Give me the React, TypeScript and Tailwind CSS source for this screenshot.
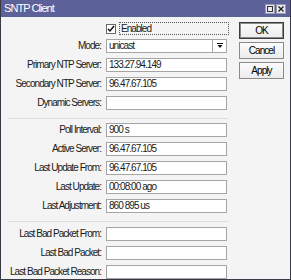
import React from 'react'

const font = "font-['Liberation_Sans',Arial,sans-serif] tracking-[-0.95px]"

function Field({ label, value, className = '' }: { label: string; value?: string; className?: string }) {
  return (
    <div className={`flex h-[14px] items-center ${className}`}>
      <div className="w-[101px] pr-[1px] text-right whitespace-nowrap leading-none">{label}</div>
      <div className="ml-[4px] flex h-[14px] w-[121px] items-center border border-[#a5a5a5] bg-white pl-[2px] leading-none">
        {value}
      </div>
    </div>
  )
}

function Btn({ label, primary }: { label: string; primary?: boolean }) {
  return (
    <button
      className={`flex h-[17px] w-[45px] items-center justify-center bg-gradient-to-b from-[#fbfbfb] to-[#ececec] leading-none text-black ${
        primary ? 'border border-[#3c3c3c] shadow-[inset_0_0_0_1px_#8a8a8a]' : 'border border-[#8a8a8a]'
      }`}
    >
      {label}
    </button>
  )
}

export default function App() {
  return (
    <div className={`h-[280px] w-[291px] overflow-hidden bg-[#f4f4f4] text-[10px] text-[#1a1a1a] ${font}`}>
      <div className="flex h-full flex-col border-x border-b border-[#3a3a46]">
        {/* title bar */}
        <div className="flex h-[17px] items-center bg-[#5d6199] pl-[3px] pr-[4px] text-[11px] text-white">
          <span className="leading-none">SNTP Client</span>
          <div className="ml-auto flex gap-[1px]">
            <div className="flex h-[10px] w-[10px] items-center justify-center border border-[#9a9ab0] bg-[#e8e8ee]">
              <div className="h-[6px] w-[6px] border border-[#333]" />
            </div>
            <div className="flex h-[10px] w-[10px] items-center justify-center border border-[#9a9ab0] bg-[#e8e8ee]">
              <svg width="6" height="6" viewBox="0 0 6 6">
                <path d="M0.5 0.5L5.5 5.5M5.5 0.5L0.5 5.5" stroke="#222" strokeWidth="1.4" />
              </svg>
            </div>
          </div>
        </div>

        <div className="flex flex-1">
          {/* form */}
          <div className="flex w-[236px] flex-col">
            <div className="mt-[5px] flex h-[13px] items-center">
              <div className="ml-[105px] flex h-[10px] w-[10px] items-center justify-center border border-[#6a6a6a] bg-white">
                <svg width="8" height="8" viewBox="0 0 8 8">
                  <path d="M1 4l2 2 4-5" fill="none" stroke="#111" strokeWidth="1.5" />
                </svg>
              </div>
              <div className="ml-[3px] flex h-[13px] w-[110px] items-center border border-dotted border-[#555] pl-[1px] leading-none">
                Enabled
              </div>
            </div>

            <div className="mt-[4px] flex h-[14px] items-center">
              <div className="w-[101px] pr-[1px] text-right leading-none">Mode:</div>
              <div className="ml-[4px] flex h-[14px] w-[107px] items-center border border-[#a5a5a5] bg-white pl-[2px] leading-none">
                unicast
              </div>
              <div className="flex h-[14px] w-[14px] items-center justify-center border border-l-0 border-[#a5a5a5] bg-white">
                <svg width="6" height="6" viewBox="0 0 6 6">
                  <path d="M0 0.5H6" stroke="#111" strokeWidth="1" />
                  <path d="M0.5 2H5.5L3 5Z" fill="#111" />
                </svg>
              </div>
            </div>

            <Field className="mt-[5px]" label="Primary NTP Server:" value="133.27.94.149" />
            <Field className="mt-[5px]" label="Secondary NTP Server:" value="96.47.67.105" />
            <Field className="mt-[5px]" label="Dynamic Servers:" />

            <div className="ml-[7px] mt-[8px] h-[1px] w-[220px] bg-[#dcdce2]" />

            <Field className="mt-[4px]" label="Poll Interval:" value="900 s" />
            <Field className="mt-[5px]" label="Active Server:" value="96.47.67.105" />
            <Field className="mt-[5px]" label="Last Update From:" value="96.47.67.105" />
            <Field className="mt-[5px]" label="Last Update:" value="00:08:00 ago" />
            <Field className="mt-[5px]" label="Last Adjustment:" value="860 895 us" />

            <div className="ml-[7px] mt-[8px] h-[1px] w-[220px] bg-[#dcdce2]" />

            <Field className="mt-[5px]" label="Last Bad Packet From:" />
            <Field className="mt-[5px]" label="Last Bad Packet:" />
            <Field className="mt-[5px]" label="Last Bad Packet Reason:" />
          </div>

          {/* buttons */}
          <div className="ml-[2px] mt-[5px] flex flex-col gap-[3px]">
            <Btn label="OK" primary />
            <Btn label="Cancel" />
            <Btn label="Apply" />
          </div>
        </div>
      </div>
    </div>
  )
}
